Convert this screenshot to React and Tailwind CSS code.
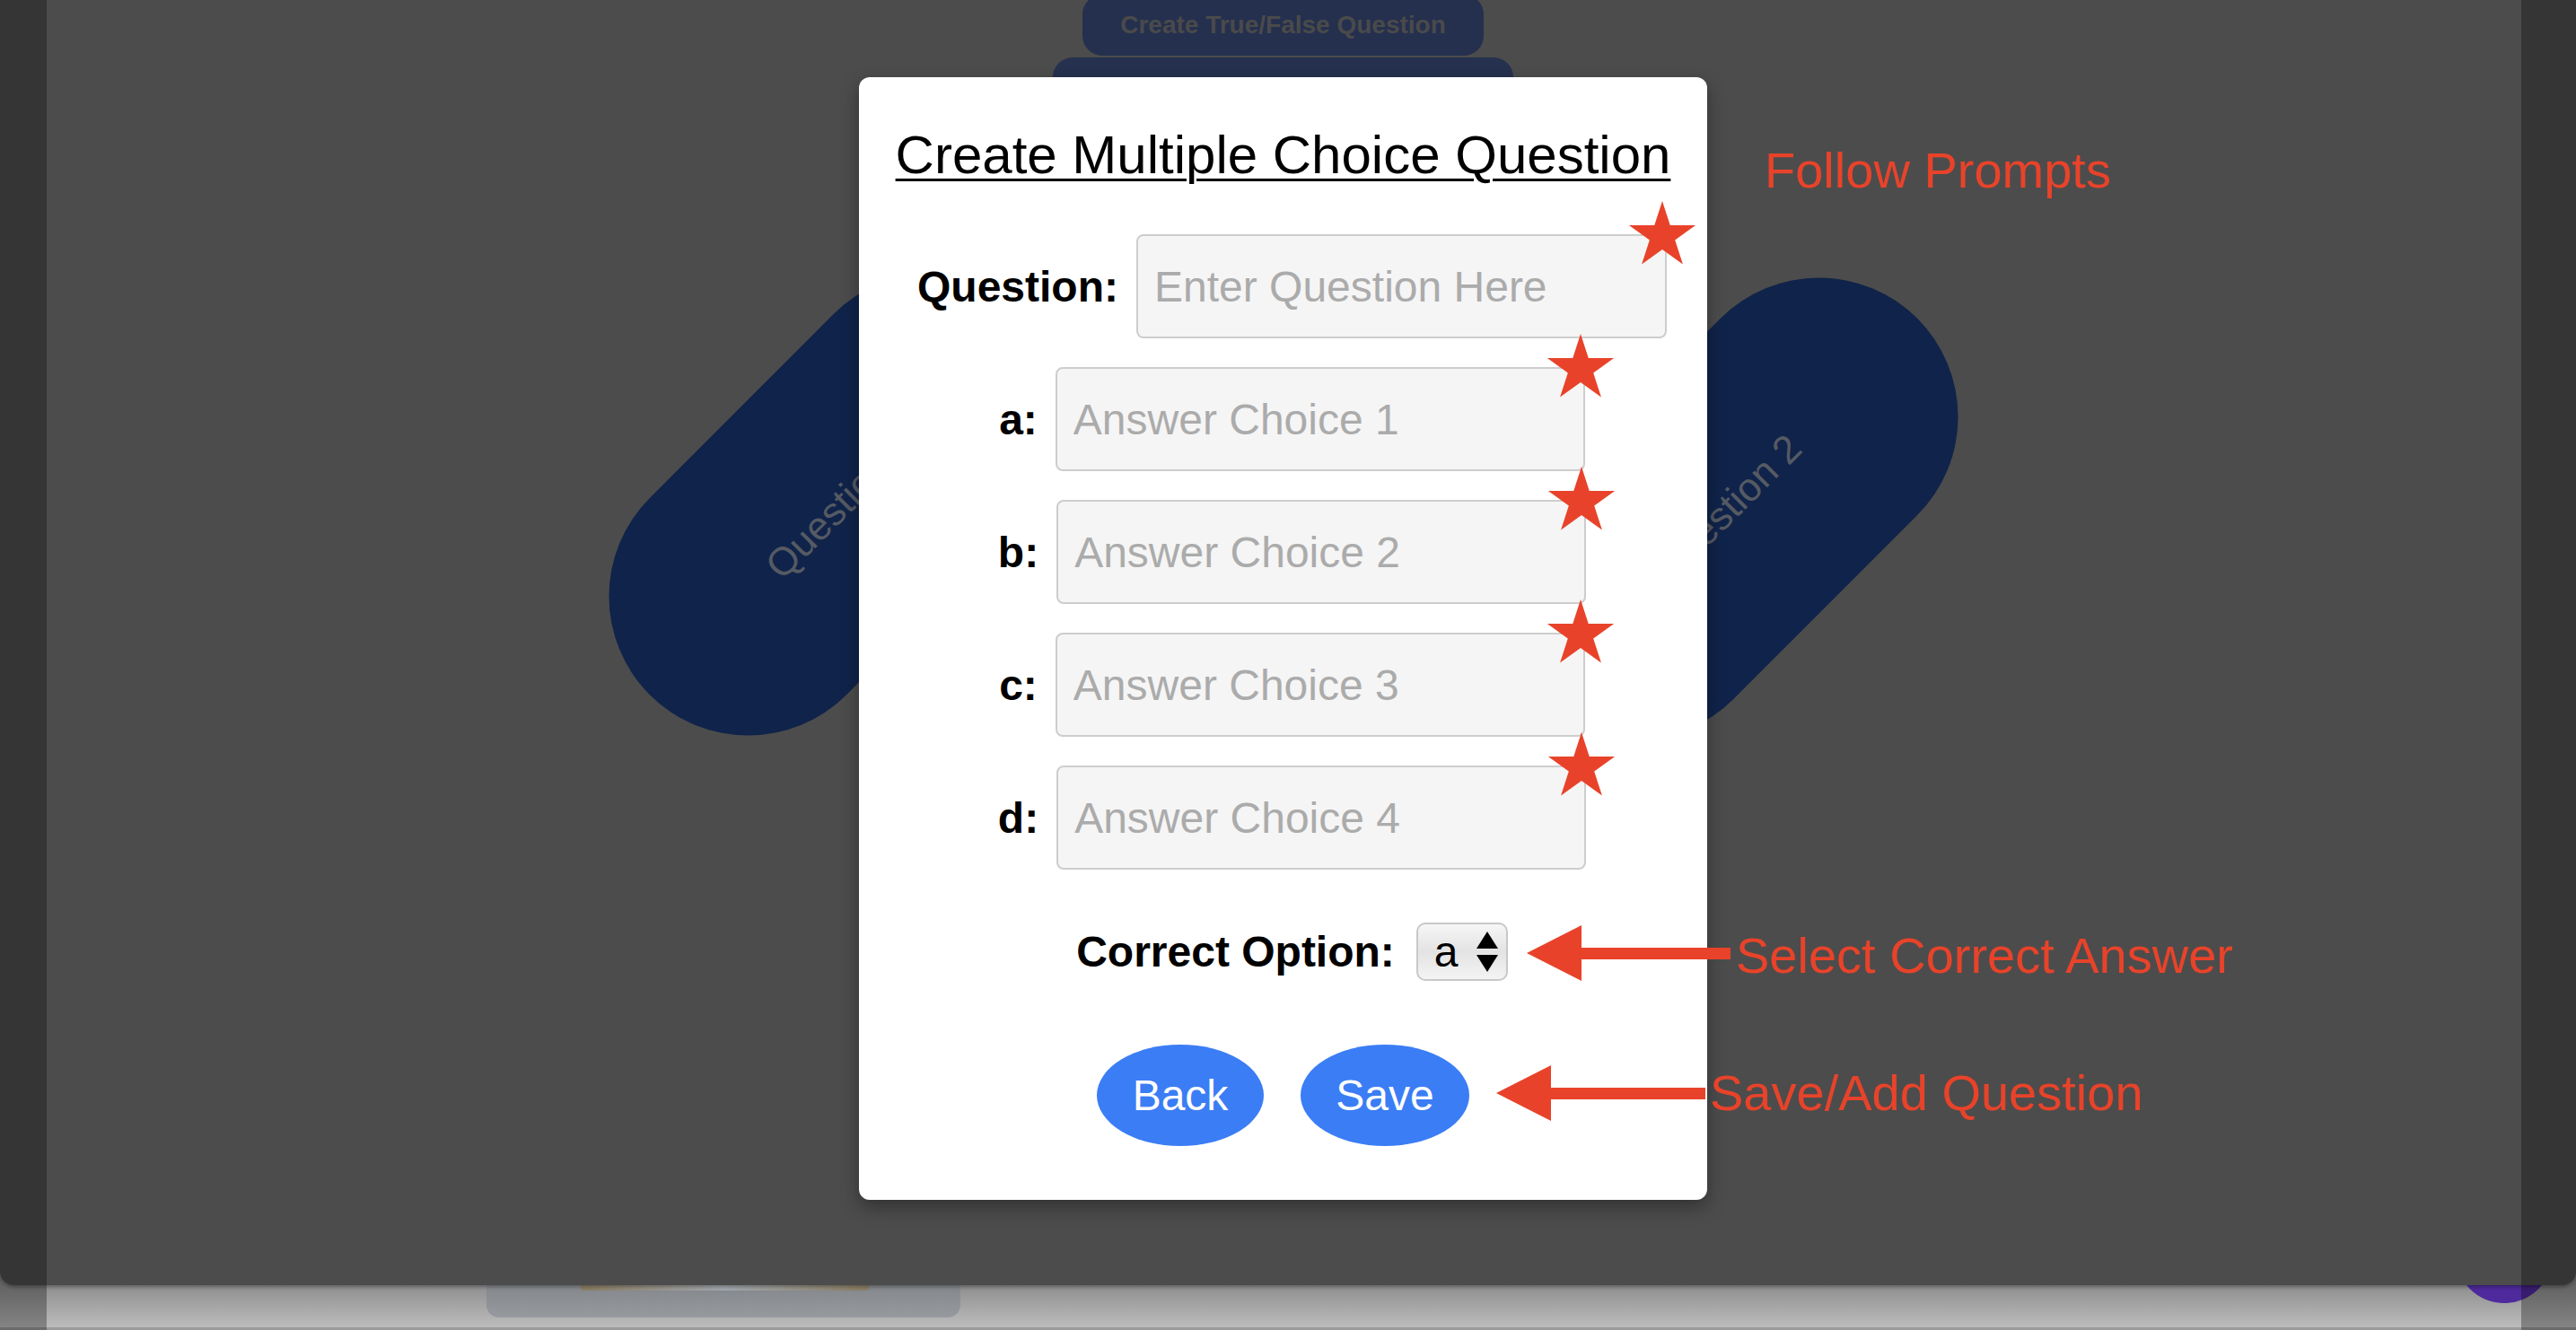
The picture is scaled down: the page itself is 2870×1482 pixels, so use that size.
import React, { useState } from 'react';

const RED = '#e8432a';

const Star = () => (
  <svg viewBox="0 0 100 100" className="pointer-events-none absolute -right-[34px] -top-[37px] h-[78px] w-[78px]">
    <polygon
      points="50,0 61.2,34.5 97.6,34.5 68.2,55.9 79.4,90.5 50,69.1 20.6,90.5 31.8,55.9 2.4,34.5 38.8,34.5"
      fill={RED}
    />
  </svg>
);

const Field = ({ label, placeholder, value, onChange }) => (
  <div className="flex items-center gap-[20px]">
    <label className="text-[48px] font-bold leading-[55px] text-black">{label}</label>
    <div className="relative">
      <input
        value={value}
        onChange={(e) => onChange(e.target.value)}
        placeholder={placeholder}
        className="h-[116px] w-[590px] rounded-[8px] border-2 border-[#cdcdcd] bg-[#f5f5f5] px-[18px] text-[48px] text-black outline-none placeholder:text-[#ababab]"
      />
      <Star />
    </div>
  </div>
);

const Arrow = ({ className, w, h }) => (
  <svg width={w} height={h} viewBox={`0 0 ${w} ${h}`} className={className}>
    <polygon points={`1,${h / 2} 62,1 62,${h / 2 - 6} ${w},${h / 2 - 6} ${w},${h / 2 + 7} 62,${h / 2 + 7} 62,${h - 1}`} fill={RED} />
  </svg>
);

const Pill = ({ className, label }) => (
  <div className={`absolute flex h-[310px] w-[600px] -rotate-45 items-center justify-center rounded-full bg-[#10234a] ${className}`}>
    <span className="text-[44px] text-[#555a63]">{label}</span>
  </div>
);

export default function App() {
  const [question, setQuestion] = useState('');
  const [choices, setChoices] = useState(['', '', '', '']);
  const [correct, setCorrect] = useState('a');

  const setChoice = (i, v) => {
    const next = [...choices];
    next[i] = v;
    setChoices(next);
  };

  return (
    <div className="relative flex h-[1482px] w-full flex-col overflow-hidden font-['Liberation_Sans',Arial,sans-serif]">
      {/* dimmed page */}
      <div className="relative z-10 h-[1432px] shrink-0 overflow-hidden rounded-b-[16px] bg-[#4c4c4c] shadow-[0_2px_4px_rgba(0,0,0,0.35)]">
        {/* page content under the backdrop */}
        <div className="absolute left-[1206px] top-[-6px] flex h-[68px] w-[447px] items-center justify-center rounded-[22px] bg-[#25304f]">
          <span className="text-[28px] font-bold text-[#4a4a4a]">Create True/False Question</span>
        </div>
        <div className="absolute left-[1173px] top-[64px] h-[90px] w-[513px] rounded-[22px] bg-[#26314f]" />
        <Pill className="left-[636px] top-[407px]" label="Question 1" />
        <Pill className="left-[1624px] top-[412px]" label="Question 2" />

        {/* modal */}
        <div className="relative flex justify-center pr-[11px] pt-[86px]">
          <div className="flex w-[945px] flex-col items-center rounded-[12px] bg-white pb-[60px] pt-[53px] shadow-[0_8px_20px_rgba(0,0,0,0.35)]">
            <h2 className="text-[60px] leading-[68px] text-black underline decoration-[3px] underline-offset-[6px]">
              Create Multiple Choice Question
            </h2>

            <div className="mt-[54px] flex flex-col items-center gap-[32px] pl-[20px]">
              <div className="flex items-center gap-[20px]">
                <label className="text-[48px] font-bold leading-[55px] text-black">Question:</label>
                <div className="relative">
                  <input
                    value={question}
                    onChange={(e) => setQuestion(e.target.value)}
                    placeholder="Enter Question Here"
                    className="h-[116px] w-[591px] rounded-[8px] border-2 border-[#cdcdcd] bg-[#f5f5f5] px-[18px] text-[48px] text-black outline-none placeholder:text-[#ababab]"
                  />
                  <Star />
                </div>
              </div>
              {['a', 'b', 'c', 'd'].map((l, i) => (
                <Field
                  key={l}
                  label={`${l}:`}
                  placeholder={`Answer Choice ${i + 1}`}
                  value={choices[i]}
                  onChange={(v) => setChoice(i, v)}
                />
              ))}
            </div>

            <div className="mt-[59px] flex items-center gap-[24px] pl-[20px]">
              <label className="text-[48px] font-bold leading-[55px] text-black">Correct Option:</label>
              <div className="relative">
                <select
                  value={correct}
                  onChange={(e) => setCorrect(e.target.value)}
                  className="h-[65px] w-[102px] appearance-none rounded-[10px] border-2 border-[#c8c8c8] bg-gradient-to-b from-[#f6f6f6] via-[#e3e3e3] to-[#f4f4f4] pl-[18px] text-[48px] leading-[55px] text-black outline-none"
                >
                  <option value="a">a</option>
                  <option value="b">b</option>
                  <option value="c">c</option>
                  <option value="d">d</option>
                </select>
                <svg viewBox="0 0 24 46" className="pointer-events-none absolute right-[11px] top-[10px] h-[46px] w-[24px]">
                  <polygon points="12,0 24,19 0,19" fill="#000" />
                  <polygon points="0,26 24,26 12,45" fill="#000" />
                </svg>
              </div>
            </div>

            <div className="mt-[71px] flex justify-center gap-[41px]">
              <button className="h-[113px] w-[186px] rounded-[50%] bg-[#3b7df5] text-[48px] text-white">Back</button>
              <button className="h-[113px] w-[188px] rounded-[50%] bg-[#3b7df5] text-[48px] text-white">Save</button>
            </div>
          </div>
        </div>

        {/* annotations */}
        <span className="absolute left-[1966px] top-[158px] text-[56px] leading-[64px] text-[#e8432a]">Follow Prompts</span>
        <Arrow className="absolute left-[1700px] top-[1030px]" w={228} h={64} />
        <span className="absolute left-[1934px] top-[1033px] text-[56px] leading-[64px] text-[#e8432a]">Select Correct Answer</span>
        <Arrow className="absolute left-[1666px] top-[1186px]" w={234} h={64} />
        <span className="absolute left-[1905px] top-[1186px] text-[56px] leading-[64px] text-[#e8432a]">Save/Add Question</span>
      </div>

      {/* uncovered strip of the page below */}
      <div className="relative -mt-[16px] flex-1 overflow-hidden border-b-[3px] border-[#9a9a9a] bg-gradient-to-b from-[#7f7f7f] to-[#bdbdbd]">
        <div className="absolute left-[542px] top-0 h-[52px] w-[528px] rounded-b-[14px] bg-gradient-to-b from-[#7c7f84] to-[#969a9f]" />
        <div className="absolute left-[647px] top-[16px] h-[6px] w-[321px] rounded-b-[4px] bg-gradient-to-r from-[#8c7e63] via-[#a4aab0] to-[#8c7e63]" />
        <div className="absolute left-[2736px] top-[-72px] h-[108px] w-[108px] rounded-full bg-[#4e2a9d]" />
      </div>

      {/* darker window edges */}
      <div className="pointer-events-none absolute inset-y-0 left-0 z-20 w-[52px] bg-black/30" />
      <div className="pointer-events-none absolute inset-y-0 right-0 z-20 w-[61px] bg-black/30" />
    </div>
  );
}
